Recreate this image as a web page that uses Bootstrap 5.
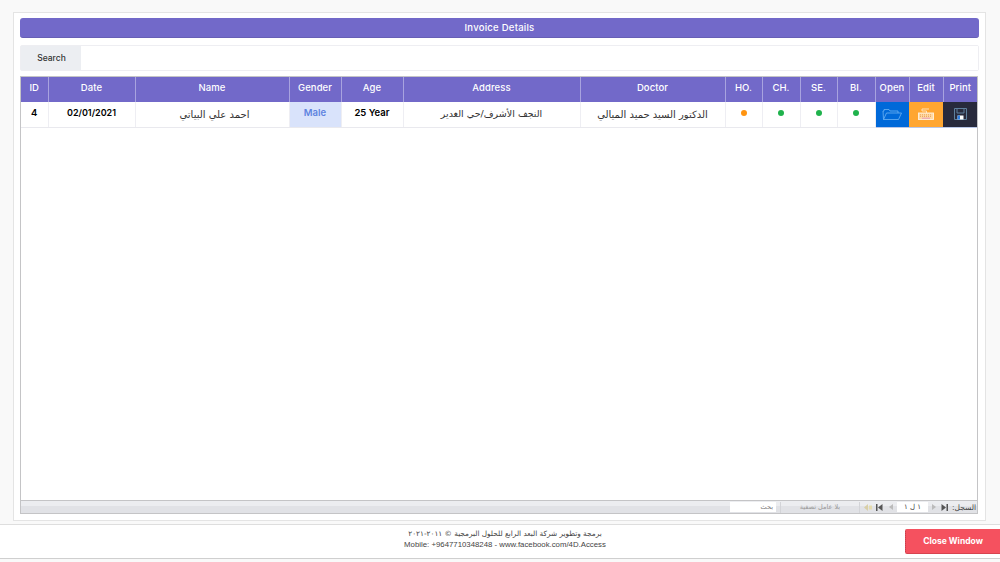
<!DOCTYPE html>
<html lang="en">
<head>
<meta charset="utf-8">
<title>Invoice Details</title>
<link href="https://cdn.jsdelivr.net/npm/bootstrap@5.3.0/dist/css/bootstrap.min.css" rel="stylesheet">
<style>
html,body{height:562px;overflow:hidden}
body{background:#f9f9f9;font-family:"Inter","Noto Sans",sans-serif;font-size:9.5px;color:#111;display:flex;flex-direction:column}
.shell{margin:12px 14px 0 13px;height:509px;flex:none;border:1px solid #e4e4e4;border-radius:0;background:#fff;padding:5px 6px 6px 6px;display:flex;flex-direction:column}
.titlebar{height:20px;background:#7269c9;color:#fff;border-radius:3px;font-size:9.5px;font-weight:500;letter-spacing:.25px;line-height:20px;text-align:center;border-bottom:1px solid #675fb5;flex:none}
.searchbox{height:26px;margin-top:7px;border:1px solid #eeeef2;border-radius:2px;flex:none;flex-wrap:nowrap}
.searchbox .input-group-text{width:61px;background:#eceef2;border:0;border-radius:0;font-size:8.5px;font-weight:500;color:#333;justify-content:center;padding:0}
.searchbox .form-control{border:0;border-radius:0;height:24px;min-height:0;padding:0 6px;font-size:9px}
.framebox{margin-top:5px;flex:1;min-height:0;margin-right:1px;border:1px solid #c4c4c6;display:flex;flex-direction:column;background:#fff}
.tablewrap{flex:1;min-height:0}
.gridtable{table-layout:fixed;width:956px;margin:0;border-collapse:collapse}
.gridtable th{height:25px;background:#7269c9;color:#fff;font-weight:500;letter-spacing:.1px;font-size:9.5px;text-align:center;vertical-align:middle;padding:0 0 3px;border:0;border-right:1px solid #a8a3df;box-shadow:none}
.gridtable th:last-child,.gridtable td:last-child{border-right:0}
.gridtable td{height:25px;background:#fff;color:#000;font-size:9.5px;font-weight:600;text-align:center;vertical-align:middle;padding:0 0 3px;border:0;border-right:1px solid #eeeef3;border-bottom:1px solid #e9e9ee;box-shadow:none}
.gridtable td.datecell{font-size:9px}
.gridtable td.ar{font-family:"DejaVu Sans","Noto Sans",sans-serif;font-weight:400;font-size:10px;color:#333;padding:0}
.gridtable td.ar.addr{font-size:9.5px}
.gridtable td.ar.namecell{padding-left:5px}
.gridtable td.male{background:#d9e3fb;color:#5f83e0}
.gridtable td.act{padding:0;border-right:0;border-bottom:1px solid #b9c7e8}
.act-open{background:#0069d9!important}
.act-edit{background:#ffa631!important}
.act-print{background:#282a3c!important}
.gridtable td svg{display:block;margin:0 auto}
.dot{display:inline-block;width:6px;height:6px;border-radius:50%;vertical-align:middle}
.dot-o{background:#ff9410}
.dot-g{background:#1fb24c}
.c1{width:27px}.c2{width:87px}.c3{width:154px}.c4{width:52px}.c5{width:62px}.c6{width:177px}.c7{width:145px}.c8{width:37px}.c9{width:38px}.c10{width:37px}.c11{width:38px}.c12{width:34px}.c13{width:34px}.c14{width:34px}
.recnav{height:13px;flex:none;background:linear-gradient(#ecedf0 0,#ecedf0 40%,#e1e2e6 40%,#e1e2e6 100%);border-top:1px solid #c4c4c6;font-family:"DejaVu Sans",sans-serif;font-size:6.5px;color:#555;line-height:11px;white-space:nowrap;overflow:hidden}
.rec-track{width:709px;flex:none}
.rec-find{width:46px;height:10px;background:#fff;text-align:right;padding-right:3px;color:#777;flex:none;line-height:10px}
.rec-filter{width:80px;margin-left:4px;text-align:center;color:#999;flex:none;border-left:1px solid #d3d4d8;border-right:1px solid #d3d4d8}
.rec-btn{width:11px;height:7px;flex:none;display:flex;justify-content:center}
.rec-btn svg{display:block}
.rec-new{margin-left:2px}
.rec-last{margin-left:1px}
.rec-box{width:31px;height:10px;background:#fff;text-align:center;flex:none;line-height:10px;margin-left:1px;font-size:7px;color:#444}
.rec-label{margin-left:2px;flex:none;color:#444;font-size:7.5px}
.footerbar{height:35px;margin-top:3px;background:#fff;border-top:1px solid #dedede;border-bottom:1px solid #cfcfcf;flex:none;position:relative}
.footnote{font-family:"Liberation Sans",sans-serif;font-size:7.8px;line-height:11px;color:#444;text-align:center;padding-top:3px;padding-left:10px}
.footnote b{font-weight:400;display:block;font-family:"DejaVu Sans",sans-serif;font-size:7.3px}
.closebtn{position:absolute;right:0;top:4px;width:95px;height:25px;background:#f5515f;border:0;border-left:1px dotted #b83a46;border-bottom:1px solid #d7434f;border-radius:2px 0 0 2px;color:#fff;font-size:8.5px;font-weight:700;padding:0}
.closebtn:hover{background:#f5515f;color:#fff}
</style>
</head>
<body>
<div class="card shell">
  <div class="titlebar">Invoice Details</div>
  <div class="input-group searchbox">
    <span class="input-group-text">Search</span>
    <input type="text" class="form-control" aria-label="Search">
  </div>
  <div class="framebox">
    <div class="tablewrap">
      <table class="table gridtable">
        <colgroup><col class="c1"><col class="c2"><col class="c3"><col class="c4"><col class="c5"><col class="c6"><col class="c7"><col class="c8"><col class="c9"><col class="c10"><col class="c11"><col class="c12"><col class="c13"><col class="c14"></colgroup>
        <thead><tr><th>ID</th><th>Date</th><th>Name</th><th>Gender</th><th>Age</th><th>Address</th><th>Doctor</th><th>HO.</th><th>CH.</th><th>SE.</th><th>BI.</th><th>Open</th><th>Edit</th><th>Print</th></tr></thead>
        <tbody><tr>
          <td>4</td><td class="datecell">02/01/2021</td>
          <td class="ar namecell" dir="rtl">احمد علي البياتي</td>
          <td class="male">Male</td><td>25 Year</td>
          <td class="ar addr" dir="rtl">النجف الأشرف/حي الغدير</td>
          <td class="ar" dir="rtl">الدكتور السيد حميد الميالي</td>
          <td><span class="dot dot-o"></span></td><td><span class="dot dot-g"></span></td><td><span class="dot dot-g"></span></td><td><span class="dot dot-g"></span></td>
          <td class="act act-open"><svg width="20" height="11" viewBox="0 0 20 11" fill="none" stroke="#6db2f2" stroke-width=".8"><path d="M1.500 10.500 1 2h1V.5h5l1 1.500h8v2"/><path d="M1.500 10.500 4.500 4H19.500l-3 6.500z"/></svg></td>
          <td class="act act-edit"><svg width="16" height="12" viewBox="0 0 16 12" fill="none"><path d="M8.500 5V3H4V1h7" stroke="#ffe6c4" stroke-width=".9"/><rect x=".5" y="5" width="15" height="6.500" fill="#ffd9a3" stroke="#fff2e0" stroke-width=".9"/><path d="M2 6.800h12M2 8.400h12" stroke="#eaa45c" stroke-dasharray="1 1"/><path d="M4 10.200h8" stroke="#e59bbd"/></svg></td>
          <td class="act act-print"><svg width="13" height="12" viewBox="0 0 13 12" fill="none"><path d="M.5.5h12v11H.5z" stroke="#5e7f9c"/><path d="M3 .5v4.500h7V.5" stroke="#5e7f9c"/><rect x="3.500" y="7.500" width="6" height="4" fill="#fff"/><rect x="3.500" y="7.500" width="2.500" height="4" fill="#2f7fe0"/></svg></td>
        </tr></tbody>
      </table>
    </div>
    <div class="recnav d-flex align-items-center">
      <div class="rec-track"></div>
      <div class="rec-find" dir="rtl">بحث</div>
      <div class="rec-filter" dir="rtl">بلا عامل تصفية</div>
      <div class="rec-btn rec-new"><svg width="9" height="7" viewBox="0 0 9 7"><path d="M5 0v7L1 3.500z" fill="#d8cfa8"/><path d="M6 1.500h3v4H6z" fill="#e6dcae"/></svg></div>
      <div class="rec-btn rec-last"><svg width="7" height="7" viewBox="0 0 7 7"><path d="M0 0h1.500v7H0zM6.500 0v7L2 3.500z" fill="#555"/></svg></div>
      <div class="rec-btn"><svg width="4" height="6" viewBox="0 0 4 6"><path d="M4 0v6L0 3z" fill="#bbb"/></svg></div>
      <div class="rec-box" dir="rtl">١ ل ١</div>
      <div class="rec-btn"><svg width="4" height="6" viewBox="0 0 4 6"><path d="M0 0v6l4-3z" fill="#bbb"/></svg></div>
      <div class="rec-btn"><svg width="7" height="7" viewBox="0 0 7 7"><path d="M.5 0v7L5 3.500zM5.500 0H7v7H5.500z" fill="#555"/></svg></div>
      <div class="rec-label" dir="rtl">السجل:</div>
    </div>
  </div>
</div>
<div class="footerbar">
  <div class="footnote"><b dir="rtl">برمجة وتطوير شركة البعد الرابع للحلول البرمجية © ٢٠١١-٢٠٢١</b>Mobile: +9647710348248 - www.facebook.com/4D.Access</div>
  <button type="button" class="btn closebtn">Close Window</button>
</div>
<script src="https://cdn.jsdelivr.net/npm/bootstrap@5.3.0/dist/js/bootstrap.bundle.min.js"></script>
</body>
</html>
